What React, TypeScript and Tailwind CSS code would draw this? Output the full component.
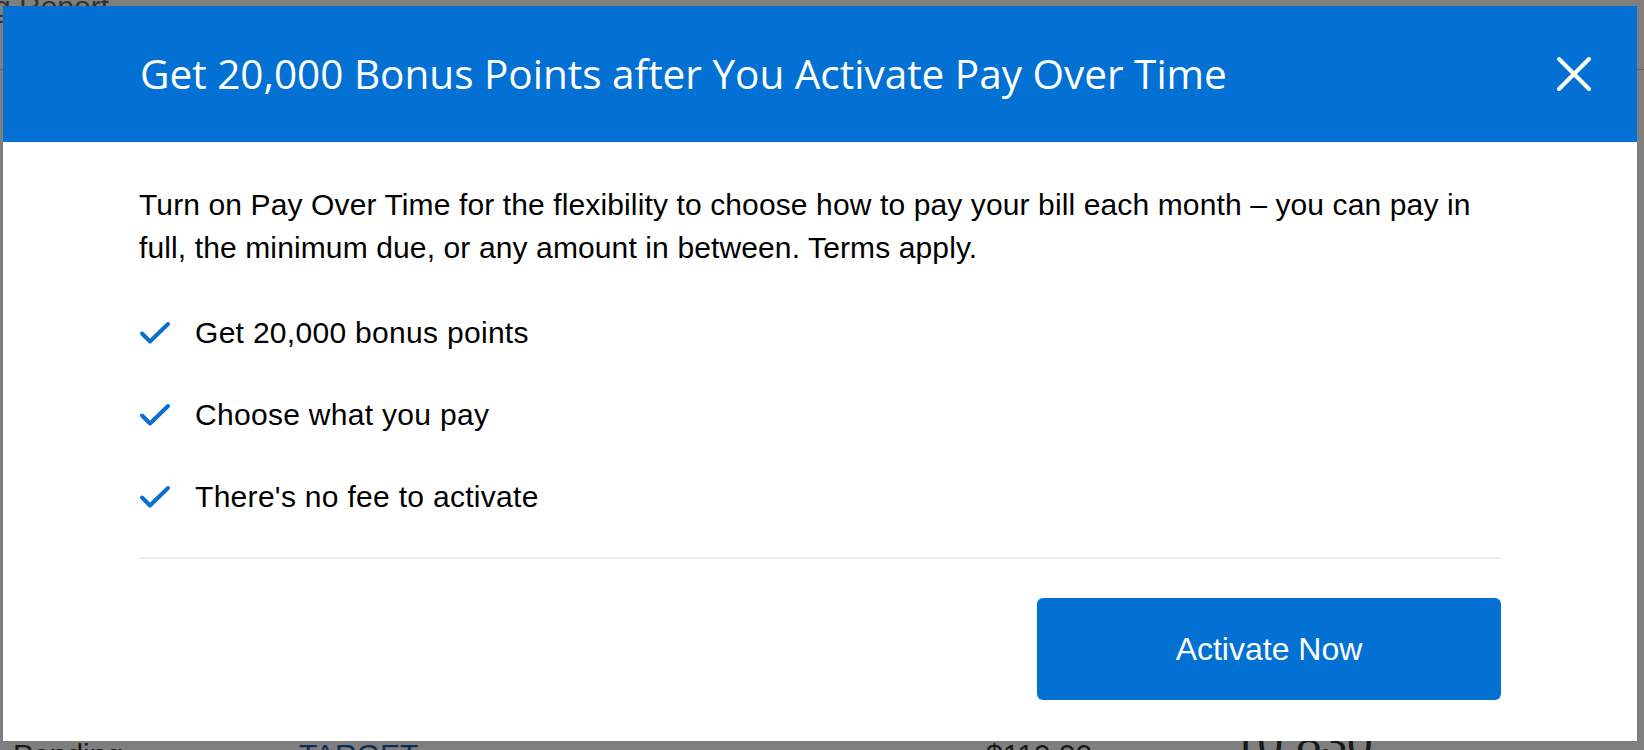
import React from "react";

const benefits = [
  "Get 20,000 bonus points",
  "Choose what you pay",
  "There's no fee to activate",
];

const Check = () => (
  <svg width="32" height="24" viewBox="0 0 32 24" fill="none" className="shrink-0">
    <path
      d="M3 12.5 L11 20.5 L29 3"
      stroke="#0a6fd0"
      strokeWidth="4"
      strokeLinecap="round"
      strokeLinejoin="round"
    />
  </svg>
);

const CloseIcon = () => (
  <svg width="36" height="36" viewBox="0 0 36 36" fill="none">
    <path d="M3 3 L33 33 M33 3 L3 33" stroke="white" strokeWidth="4" strokeLinecap="round" />
  </svg>
);

export default function App() {
  return (
    <div className="relative h-[750px] w-full overflow-hidden bg-white font-['Liberation_Sans',Arial,sans-serif]">
      {/* page behind the overlay */}
      <div className="flex h-full flex-col justify-between">
        <div className="-mt-[16px] flex flex-col">
          <div className="text-[30px] text-[#666]">
            <span className="-ml-[6px]">g Report</span>
          </div>
          <div className="mt-[40px] h-[1px] bg-[#ccc]" />
        </div>
        <div className="-mb-[27px] flex items-end text-[30px] text-[#333]">
          <span className="ml-[13px] w-[286px]">Pending</span>
          <span className="w-[687px] text-[#1e5aa8]">TARGET</span>
          <span className="w-[246px]">$110.00</span>
          <span className="text-[46px]">10,830</span>
        </div>
      </div>

      <div className="absolute inset-0 bg-black/50" />

      {/* modal */}
      <div className="absolute left-[3px] top-[6px] flex h-[735px] w-[1634px] flex-col bg-white">
        <div className="flex h-[136px] shrink-0 items-center justify-between bg-[#0271d3] pl-[137px] pr-[45px]">
          <h2 className="text-[40.5px] font-normal leading-none text-white font-['Open_Sans',sans-serif]">
            Get 20,000 Bonus Points after You Activate Pay Over Time
          </h2>
          <button className="flex h-[36px] w-[36px] items-center justify-center">
            <CloseIcon />
          </button>
        </div>

        <div className="flex flex-1 flex-col px-[136px] pt-[41px] pb-[40px]">
          <p className="text-[30px] leading-[43px] tracking-[0.12px] text-black">
            Turn on Pay Over Time for the flexibility to choose how to pay your bill each month – you can pay in
            full, the minimum due, or any amount in between. Terms apply.
          </p>

          <ul className="mt-[42px] flex flex-col gap-[39px]">
            {benefits.map((b) => (
              <li
                key={b}
                className="flex items-center gap-[24px] text-[30px] leading-[43px] tracking-[0.3px] text-black"
              >
                <Check />
                <span>{b}</span>
              </li>
            ))}
          </ul>

          <div className="mt-[39px] h-[2px] bg-[#ededed]" />

          <div className="mt-[39px] flex justify-end">
            <button className="h-[102px] w-[464px] rounded-[6px] bg-[#0271d3] text-[32px] text-white">
              Activate Now
            </button>
          </div>
        </div>
      </div>
    </div>
  );
}
